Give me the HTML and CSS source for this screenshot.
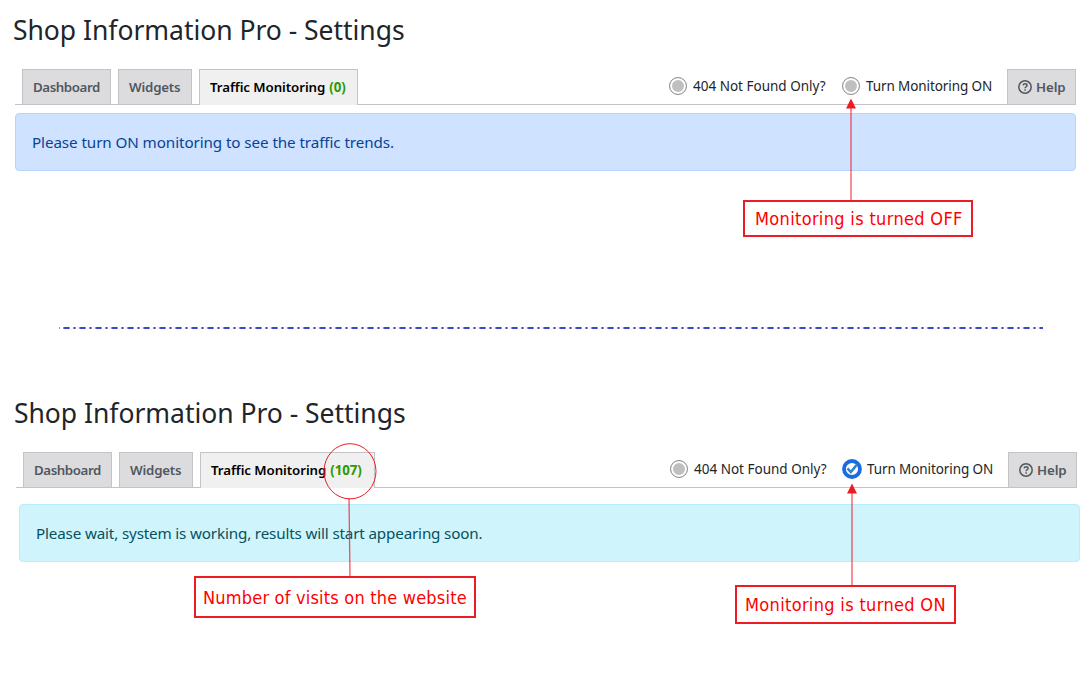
FILE: index.html
```html
<!DOCTYPE html>
<html lang="en">
<head>
<meta charset="utf-8">
<title>Shop Information Pro - Settings</title>
<link rel="stylesheet" href="styles.css">
</head>
<body>
<main class="page">
  <section class="panel">
    <h1 class="title"><span>Shop Information Pro - Settings</span></h1>
    <nav class="tabs">
      <a class="tab tab-dashboard"><span>Dashboard</span></a>
      <a class="tab tab-widgets"><span>Widgets</span></a>
      <a class="tab tab-active"><span class="tab-label">Traffic Monitoring</span><b class="count">(0)</b></a>
      <div class="options">
        <label class="option option-404"><i class="radio"></i><span>404 Not Found Only?</span></label>
        <label class="option option-on"><i class="radio"></i><span>Turn Monitoring ON</span></label>
      </div>
      <a class="tab tab-help"><svg class="help-icon" viewBox="0 0 14 14"><circle cx="7" cy="7" r="6.2"/><path d="M5.1 5.4C5.3 4.3 6 3.8 7 3.8c1.200 0 2 .7 2 1.600C9 6.800 7.100 6.700 7.100 8.300"/><path d="M7.100 9.300v1.500"/></svg><span>Help</span></a>
    </nav>
    <div class="alert alert-primary"><span>Please turn ON monitoring to see the traffic trends.</span></div>
  </section>

  <svg class="divider" viewBox="0 0 984 2"><path class="divider-edge" d="M0 1h1M4 1H984"/><path class="divider-core" d="M5 1H984"/></svg>

  <section class="panel panel-second">
    <h1 class="title"><span>Shop Information Pro - Settings</span></h1>
    <nav class="tabs">
      <a class="tab tab-dashboard"><span>Dashboard</span></a>
      <a class="tab tab-widgets"><span>Widgets</span></a>
      <a class="tab tab-active tab-active-wide"><span class="tab-label">Traffic Monitoring</span><b class="count">(107)</b></a>
      <div class="options">
        <label class="option option-404"><i class="radio"></i><span>404 Not Found Only?</span></label>
        <label class="option option-on"><svg class="checked" viewBox="0 0 20 20"><circle class="checked-ring" cx="10" cy="10" r="8"/><path d="M5.500 9.400l3.300 3.700 5.700-7"/></svg><span>Turn Monitoring ON</span></label>
      </div>
      <a class="tab tab-help"><svg class="help-icon" viewBox="0 0 14 14"><circle cx="7" cy="7" r="6.2"/><path d="M5.1 5.4C5.3 4.3 6 3.8 7 3.8c1.200 0 2 .7 2 1.600C9 6.800 7.100 6.700 7.100 8.300"/><path d="M7.100 9.300v1.500"/></svg><span>Help</span></a>
    </nav>
    <div class="alert alert-info"><span>Please wait, system is working, results will start appearing soon.</span></div>
  </section>

  <svg class="annotations" viewBox="0 0 1092 692">
    <path class="leader" d="M851 108V201M852 493V586M349 498L350 577"/>
    <path class="arrow" d="M851 98.500L856 108.500H846ZM852 483.500L857 493.500H847Z"/>
    <ellipse class="ring" cx="350" cy="471.300" rx="26" ry="27.600"/>
  </svg>
  <div class="callout callout-off"><span>Monitoring is turned OFF</span></div>
  <div class="callout callout-visits"><span>Number of visits on the website</span></div>
  <div class="callout callout-on"><span>Monitoring is turned ON</span></div>
</main>
</body>
</html>
```

FILE: styles.css
```css
* { box-sizing: border-box; }
body {
  margin: 0;
  background: #fff;
  color: #212529;
  font-family: "Noto Sans", "Open Sans", sans-serif;
}
.page {
  position: relative;
  width: 1092px;
  height: 692px;
  overflow: hidden;
}
.panel { padding: 13px 16px 0 15px; height: 327px; }
.title {
  margin: 0 0 22px -2px;
  height: 34px;
  font-size: 26.500px;
  line-height: 34px;
  letter-spacing: -.03px;
  font-weight: 400;
  white-space: nowrap;
}
.tabs {
  display: flex;
  height: 36px;
  padding-left: 7px;
  border-bottom: 1px solid #c3c4c7;
}
.tab {
  display: flex;
  align-items: center;
  height: 35px;
  padding-left: 10px;
  margin-right: 7px;
  border: 1px solid #c3c4c7;
  border-bottom: 0;
  background: #dcdcde;
  color: #50575e;
  font-size: 13.300px;
  font-weight: 600;
  line-height: 20px;
  white-space: nowrap;
}
.tab-dashboard { width: 89px; letter-spacing: -.42px; }
.tab-widgets { width: 74px; letter-spacing: -.2px; }
.tab-active {
  width: 159px;
  height: 36px;
  padding-bottom: 1px;
  background: #f0f0f1;
  color: #000;
  letter-spacing: -.08px;
}
.tab-active-wide { width: 175px; }
.count { margin-left: 4px; color: #2c9a00; font-weight: 700; }
.options {
  display: flex;
  margin-left: auto;
  height: 34px;
  align-items: center;
  font-size: 13.500px;
  white-space: nowrap;
}
.option { display: flex; align-items: center; }
.option-404 { width: 173px; }
.option-on { width: 165px; letter-spacing: -.1px; }
.radio {
  width: 18px;
  height: 18px;
  margin-right: 6px;
  border: 1px solid #8c8f94;
  border-radius: 50%;
  background: #bfbfbf;
  box-shadow: inset 0 0 0 2px #fff;
}
.radio, .checked { flex: none; }
.checked { width: 20px; height: 20px; margin: 0 5px 0 -1px; }
.checked-ring { fill: #fff; stroke: #1a6de0; stroke-width: 3.800; }
.checked path { fill: none; stroke: #3582c4; stroke-width: 2.500; }
.tab-help { width: 69px; margin-right: 0; letter-spacing: -.1px; }
.help-icon {
  width: 14px;
  height: 14px;
  margin-right: 4px;
  fill: none;
  stroke: #50575e;
  stroke-width: 1.500;
}
.alert {
  display: flex;
  align-items: center;
  height: 58px;
  margin-top: 8px;
  padding: 0 16px;
  border: 1px solid;
  border-radius: 4px;
  font-size: 15.200px;
  white-space: nowrap;
}
.alert-primary { background: #cfe2ff; border-color: #b6d4fe; color: #084298; letter-spacing: -.08px; }
.alert-info { background: #cff4fc; border-color: #b6effb; color: #055160; margin: 16px -3px 0 3px; letter-spacing: -.15px; }
.divider { display: block; width: 984px; height: 2px; margin-left: 59px; }
.divider path { fill: none; stroke-width: 2; }
.divider-edge { stroke: #8e90c4; stroke-dasharray: 7 3 3 3; }
.divider-core { stroke: #3f48cc; stroke-dasharray: 5 5 1 5; }
.panel-second { height: 363px; padding: 67px 15px 0 16px; }
.annotations {
  position: absolute;
  inset: 0;
  width: 1092px;
  height: 692px;
}
.leader { fill: none; stroke: #ed1c24; stroke-opacity: .75; stroke-width: 1.300; }
.arrow { fill: #ed1c24; }
.ring { fill: none; stroke: #ed1c24; stroke-width: 1; }
.callout {
  position: absolute;
  display: flex;
  align-items: center;
  border: 2px solid #ed1c24;
  background: #fff;
  color: #f00;
  font-family: "DejaVu Sans Condensed", "DejaVu Sans", sans-serif;
  font-stretch: condensed;
  font-size: 18px;
  letter-spacing: .33px;
  white-space: nowrap;
}
.callout-off { left: 743px; top: 200px; width: 230px; height: 37px; padding-left: 10px; }
.callout-visits { left: 194px; top: 576px; width: 282px; height: 42px; padding-left: 7px; letter-spacing: .2px; }
.callout-on { left: 735px; top: 585px; width: 221px; height: 39px; padding-left: 8px; }
```
